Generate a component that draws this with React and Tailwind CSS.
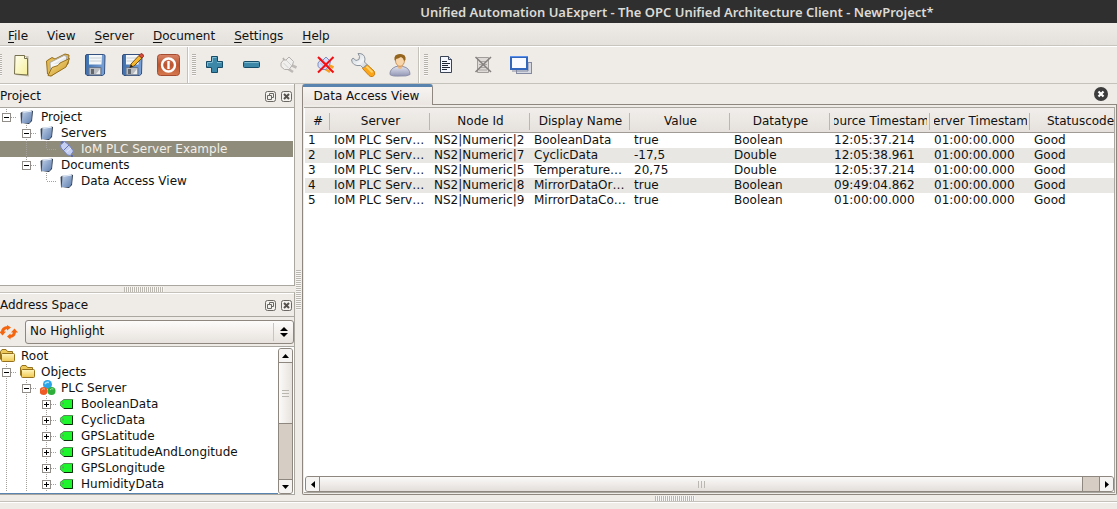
import React from "react";

const menus = [
  ["F", "ile"],
  ["", "View"],
  ["S", "erver"],
  ["D", "ocument"],
  ["S", "ettings"],
  ["H", "elp"],
];

const Svg = ({ w = 26, h = 26, children, ...rest }) => (
  <svg width={w} height={h} viewBox={`0 0 ${w} ${h}`} className="block shrink-0" aria-hidden="true" {...rest}>
    {children}
  </svg>
);

const NewIcon = () => (
  <Svg>
    <defs>
      <linearGradient id="paper" x1="0" y1="0" x2="1" y2="1">
        <stop offset="0" stopColor="#fffff0" />
        <stop offset="1" stopColor="#f7ef9a" />
      </linearGradient>
    </defs>
    <path d="M8 4.500 20.500 4 21 24.500 8 23z" fill="#8b8460" opacity=".45" />
    <path d="M7 3.500H16.500L19.500 6.500V23L6.500 22z" fill="url(#paper)" stroke="#77704c" />
    <path d="M16.500 3.500V6.500H19.500" fill="#fff" stroke="#77704c" />
  </Svg>
);

const OpenIcon = () => (
  <Svg>
    <defs>
      <linearGradient id="folder" x1="0" y1="0" x2="1" y2="1">
        <stop offset="0" stopColor="#fbe7a0" />
        <stop offset="1" stopColor="#c98f13" />
      </linearGradient>
    </defs>
    <path d="M1.500 9 7 5.500 10 7 20 2 24 3 23 12 6 24 2.500 22z" fill="#e2b850" stroke="#96701f" />
    <path d="M5 10.500 19 3.500 22 4.500 20 12 8 17 5.500 20z" fill="#f7f7f7" stroke="#aaa" />
    <path d="M8 12 21 5 19 12z" fill="#e6e9eb" />
    <path d="M3 23.500 7 15.500 13 13.500 15 11 24.500 6.500 21 15 6 24z" fill="url(#folder)" stroke="#96701f" />
  </Svg>
);

const Disk = ({ children, id }) => (
  <Svg>
    <defs>
      <linearGradient id={id} x1="0" y1="0" x2="1" y2="0">
        <stop offset="0" stopColor="#3d6fae" />
        <stop offset="1" stopColor="#7ba3d8" />
      </linearGradient>
    </defs>
    <path d="M3.500 4Q3.500 2.500 5 2.500H21.500Q23 2.500 23 4L22.500 22 20.500 23.500H5L3.500 22z" fill={`url(#${id})`} stroke="#34507e" />
    <path d="M7 3H20L19.500 12.500H7z" fill="#f4f7f9" />
    <path d="M7.500 6H19.500M7.500 9H19.500" stroke="#c6ced4" />
    <path d="M7 15.500H19V23H7z" fill="#b9bcc0" stroke="#63758e" />
    <path d="M9 17H12V22H9z" fill="#61676d" />
    <path d="M14 22 18 17V22z" fill="#ececec" />
    {children}
  </Svg>
);

const PowerIcon = () => (
  <Svg>
    <defs>
      <linearGradient id="power" x1="0" y1="0" x2="0" y2="1">
        <stop offset="0" stopColor="#d98668" />
        <stop offset=".5" stopColor="#bb5430" />
        <stop offset="1" stopColor="#d67a50" />
      </linearGradient>
    </defs>
    <rect x="1.500" y="2.500" width="22" height="21" rx="3" fill="url(#power)" stroke="#a64a30" />
    <circle cx="12.500" cy="13" r="6.500" fill="none" stroke="#fff" strokeWidth="2.400" />
    <path d="M12.500 9V17" stroke="#fff" strokeWidth="2.400" />
  </Svg>
);

const PlusIcon = () => (
  <Svg>
    <path d="M9.500 4.500H15.500V9.500H20.500V15.500H15.500V20.500H9.500V15.500H4.500V9.500H9.500z" fill="#3d87a8" stroke="#164c68" strokeLinejoin="round" />
    <path d="M10.500 10V5.500H14.500M5.500 14V10.500H10.500M15 10.500H19.500" fill="none" stroke="#82bad0" />
  </Svg>
);

const MinusIcon = () => (
  <Svg>
    <rect x="4.500" y="9.500" width="16" height="6" rx="1" fill="#3d87a8" stroke="#164c68" />
    <path d="M5.500 10.500H19.500" stroke="#82bad0" />
  </Svg>
);

const Plug = ({ fill, stroke, accent }) => (
  <g>
    <path d="M15 13 20.500 15.500M11.500 16.500 17 20" fill="none" stroke={accent} strokeWidth="2.600" />
    <path d="M7 6 8.500 8.500" stroke={stroke} strokeWidth="1.600" />
    <path d="M5 11 7.500 8 10 8 13 5 17.500 9.500 16.500 13 13 17.500 8.500 17.500 5 14.500z" fill={fill} stroke={stroke} />
    <path d="M10 8 16 14M7.500 11 12.500 16" stroke={stroke} opacity=".45" />
  </g>
);

const ConnectIcon = () => (
  <Svg>
    <Plug fill="#f1efee" stroke="#b3b0ad" accent="#bcb9b6" />
  </Svg>
);

const DisconnectIcon = () => (
  <Svg>
    <Plug fill="#d5dcf8" stroke="#7f8cc8" accent="#f9a01f" />
    <path d="M5 5 20.500 20.500M20.500 5 5 20.500" stroke="#f50d12" strokeWidth="2" />
  </Svg>
);

const WrenchIcon = () => (
  <Svg>
    <defs>
      <linearGradient id="steel" x1="0" y1="0" x2="1" y2="1">
        <stop offset="0" stopColor="#c3ccd4" />
        <stop offset=".6" stopColor="#f3f5f7" />
        <stop offset="1" stopColor="#c0c7ce" />
      </linearGradient>
    </defs>
    <path d="M12.500 16.500 17 12.500 24 19Q26 23 22.500 24.500 20.500 25 19 23.500z" fill="#fba51b" stroke="#c97d10" />
    <path d="M16.500 14.500 22.500 20.500" stroke="#ffd36b" strokeWidth="2" />
    <path d="M8 1.500Q14.500 1 15 7L14.500 10 17 12.500 13 16 10.500 13.500Q2.500 14.500 1.500 8L3 6 6 8.500 9 7.500 9.500 4.500z" fill="url(#steel)" stroke="#8d959c" />
  </Svg>
);

const UserIcon = () => (
  <Svg>
    <defs>
      <linearGradient id="shirt" x1="0" y1="0" x2="0" y2="1">
        <stop offset="0" stopColor="#dfe2ef" />
        <stop offset="1" stopColor="#9296b4" />
      </linearGradient>
    </defs>
    <path d="M3 22.500Q2.500 17 9 14.500H16Q23 16 23 22.500 20 24.500 13 24 5 24.500 3 22.500z" fill="url(#shirt)" stroke="#8c90aa" />
    <path d="M10 13H16L15 16Q13 18 11 16z" fill="#e9b884" />
    <ellipse cx="13" cy="8.500" rx="4.500" ry="5.800" fill="#f9d5ab" stroke="#c9935a" />
    <path d="M7.500 8Q6.500 2 13 2T18.500 8L17 9Q16.500 6 14 5 10.500 7 9 7L8.500 9z" fill="#93651f" />
  </Svg>
);

const DocIcon = () => (
  <Svg>
    <path d="M6.500 4.500H14.500L17.500 7.500V20.500H6.500z" fill="#f4f7ff" stroke="#3b4454" />
    <path d="M14.500 4.500V7.500H17.500" fill="#c7d8ff" stroke="#3b4454" />
    <path d="M8 9.500H13M8 11.500H16M8 13.500H14M8 15.500H16M8 17.500H13" stroke="#1f2735" />
  </Svg>
);

const DocOffIcon = () => (
  <Svg>
    <path d="M6.500 5.500H17.500V20.500H6.500z" fill="#dddad7" stroke="#a09d9a" />
    <path d="M8 9.500H16M8 12.500H16M8 15.500H16M8 18H16" stroke="#aaa7a4" />
    <path d="M4.500 5 20 20M20 5 4.500 20" stroke="#858280" strokeWidth="1.600" />
  </Svg>
);

const WindowsIcon = () => (
  <Svg>
    <rect x="8.500" y="10.500" width="15" height="11" fill="#d6d9e2" stroke="#8289a0" />
    <path d="M4 19H20V11" fill="none" stroke="#8289a0" />
    <rect x="3" y="5" width="16" height="12" fill="#f8faff" stroke="#3266bd" strokeWidth="2" />
    <path d="M2 4.500H20" stroke="#5c90ed" />
  </Svg>
);

const groups = [
  [
    ["New", <NewIcon />],
    ["Open", <OpenIcon />],
    ["Save", <Disk id="disk" />],
    [
      "Save as",
      <Disk id="diskEdit">
        <path d="M11 15.500 12 12 20 3.500 23 6 15 14z" fill="#f5b62b" stroke="#74501a" />
        <path d="M20 3.500 22 1.500Q25 2 24.500 4.500L23 6z" fill="#dc4c3b" stroke="#9c3528" />
        <path d="M10.500 16 12 12.500 14 14.500z" fill="#222" />
      </Disk>,
    ],
    ["Exit", <PowerIcon />],
  ],
  [
    ["Add server", <PlusIcon />],
    ["Remove server", <MinusIcon />],
    ["Connect", <ConnectIcon />],
    ["Disconnect", <DisconnectIcon />],
    ["Server properties", <WrenchIcon />],
    ["Change user", <UserIcon />],
  ],
  [
    ["Add document", <DocIcon />],
    ["Remove document", <DocOffIcon />],
    ["Windows", <WindowsIcon />],
  ],
];

const BookIcon = () => (
  <Svg w={16} h={16}>
    <defs>
      <linearGradient id="book" x1="0" y1="0" x2="1" y2="1">
        <stop offset="0" stopColor="#c3d3ea" />
        <stop offset="1" stopColor="#6080b0" />
      </linearGradient>
    </defs>
    <path d="M0.500 4 2.500 2.500 3 14 1 14.500z" fill="#35465f" />
    <path d="M2 14 9 15 12 12 13 2 11.500 1.500z" fill="#26344b" />
    <path d="M3 2.500 12 1.500 11.500 11 9.500 14 1.500 14z" fill="url(#book)" />
    <path d="M3.500 3.200 11.500 2.200" stroke="#e6eef8" />
  </Svg>
);

const ServerIcon = () => (
  <Svg w={16} h={16}>
    <path d="M1 2.500 3 .5M11 15 13 15" stroke="#5d6aa5" strokeWidth="2" />
    <path d="M0.500 4 4.500 0.500 9 4 13.500 10 10.500 14.500 7.500 14 1 7z" fill="#c4cff2" stroke="#7583bf" />
    <path d="M3.500 9.500 9 4" stroke="#6776b4" />
    <path d="M6.500 11 11 7" stroke="#e6ecfd" />
  </Svg>
);

const FolderIcon = () => (
  <Svg w={16} h={16}>
    <defs>
      <linearGradient id="smallFolder" x1="0" y1="0" x2="0" y2="1">
        <stop offset="0" stopColor="#fff6bf" />
        <stop offset="1" stopColor="#f0c850" />
      </linearGradient>
    </defs>
    <path d="M0.500 11.500V3.500L2 1.500H6L7.500 3.500H12.500V6" fill="#edc95c" stroke="#95701d" />
    <rect x="1.500" y="5.500" width="13" height="8" rx="1" fill="url(#smallFolder)" stroke="#95701d" />
  </Svg>
);

const ObjectsIcon = () => (
  <Svg w={16} h={16}>
    <circle cx="7.500" cy="4.500" r="4.500" fill="#2ba4e8" />
    <circle cx="3.500" cy="11" r="4" fill="#ef5a24" />
    <circle cx="11.500" cy="11" r="4" fill="#2fae3c" />
    <path d="M5 4Q6.500 1.500 9 2.500" stroke="#a7e1ff" strokeWidth="1.500" fill="none" />
    <path d="M1.500 10Q3 8 5 9" stroke="#ffb08a" fill="none" />
    <path d="M10 10Q11.500 8 13.500 9" stroke="#9be69a" fill="none" />
  </Svg>
);

const TagIcon = () => (
  <Svg w={16} h={16}>
    <path d="M4 3H13V13H4L0 9.500V6.500z" fill="#1ff52c" />
    <path d="M12.500 3.500H4L0 6.500V9L4 12.500" fill="none" stroke="#5b8a5b" />
    <path d="M4 12.500H12.500V4" fill="none" stroke="#0a2a0a" />
    <circle cx="3" cy="7.500" r="1" fill="#6f8f6f" />
  </Svg>
);

// One 20px indentation step: dotted guide lines plus an optional expander box.
const Guide = ({ up, down, right, box }) => (
  <Svg w={20} h={16}>
    <g stroke="#a3a09c" strokeDasharray="1 1">
      {up && <path d="M6.500 0V8" />}
      {down && <path d="M6.500 8V16" />}
      {right && <path d="M7 8.500H16" />}
    </g>
    {box && (
      <>
        <rect x="2.500" y="4.500" width="8" height="8" fill="#fff" stroke="#918d88" />
        <path d={box === "+" ? "M4 8.500H9M6.500 6V11" : "M4 8.500H9"} stroke="#000" />
      </>
    )}
  </Svg>
);

const icons = { book: BookIcon, server: ServerIcon, folder: FolderIcon, objects: ObjectsIcon, tag: TagIcon };

const TreeRow = ({ guides, icon, label, selected, level }) => {
  const Icon = icons[icon];
  return (
    <li
      role="treeitem"
      aria-level={level}
      aria-selected={!!selected}
      className={
        selected
          ? "flex h-4 items-center whitespace-nowrap bg-[#908c7c] text-[#f2f0e8]"
          : "flex h-4 items-center whitespace-nowrap"
      }
    >
      {guides.map((g, i) => (
        <Guide key={i} {...g} />
      ))}
      <Icon />
      <span className="pl-[5px]">{label}</span>
    </li>
  );
};

const line = { up: true, down: true };
const none = {};
const projectTree = [
  { label: "Project", icon: "book", guides: [{ up: true, right: true, box: "-" }] },
  { label: "Servers", icon: "book", guides: [none, { up: true, down: true, right: true, box: "-" }] },
  { label: "IoM PLC Server Example", icon: "server", selected: true, guides: [none, line, { up: true, right: true }] },
  { label: "Documents", icon: "book", guides: [none, { up: true, right: true, box: "-" }] },
  { label: "Data Access View", icon: "book", guides: [none, none, { up: true, right: true }] },
];
const addressTree = [
  { label: "Root", icon: "folder", guides: [] },
  { label: "Objects", icon: "folder", guides: [{ ...line, right: true, box: "-" }] },
  { label: "PLC Server", icon: "objects", guides: [line, { ...line, right: true, box: "-" }] },
  ...["BooleanData", "CyclicData", "GPSLatitude", "GPSLatitudeAndLongitude", "GPSLongitude", "HumidityData"].map(
    (label) => ({ label, icon: "tag", guides: [line, line, { ...line, right: true, box: "+" }] })
  ),
];

const Dock = ({ title }) => (
  <div className="flex h-6 shrink-0 items-center border-t border-b border-t-white border-b-[#aaa6a0]">
    <h2 className="flex-1">{title}</h2>
    <button aria-label={`Float ${title}`} className="mr-[5px]">
      <Svg w={11} h={11}>
        <rect x=".5" y=".5" width="10" height="10" rx="2" fill="#f4f2ef" stroke="#6b6763" />
        <path d="M4.500 4V2.500H8.500V6.500H7M2.500 4.500H6.500V8.500H2.500z" fill="none" stroke="#6b6763" />
      </Svg>
    </button>
    <button aria-label={`Close ${title}`} className="mr-[2px]">
      <Svg w={11} h={11}>
        <rect x=".5" y=".5" width="10" height="10" rx="2" fill="#f4f2ef" stroke="#6b6763" />
        <path d="M3 3 8 8M8 3 3 8" stroke="#55514d" strokeWidth="2" />
      </Svg>
    </button>
  </div>
);

const GripH = () => (
  <div className="h-[5px] w-10 bg-[repeating-linear-gradient(90deg,#bab6b0_0_1px,#f8f7f5_1px_2px)]" />
);

const columns = ["#", "Server", "Node Id", "Display Name", "Value", "Datatype", "Source Timestamp", "Server Timestamp", "Statuscode"];
const rows = [
  ["1", "IoM PLC Serv…", "NS2|Numeric|2", "BooleanData", "true", "Boolean", "12:05:37.214", "01:00:00.000", "Good"],
  ["2", "IoM PLC Serv…", "NS2|Numeric|7", "CyclicData", "-17,5", "Double", "12:05:38.961", "01:00:00.000", "Good"],
  ["3", "IoM PLC Serv…", "NS2|Numeric|5", "Temperature…", "20,75", "Double", "12:05:37.214", "01:00:00.000", "Good"],
  ["4", "IoM PLC Serv…", "NS2|Numeric|8", "MirrorDataOr…", "true", "Boolean", "09:49:04.862", "01:00:00.000", "Good"],
  ["5", "IoM PLC Serv…", "NS2|Numeric|9", "MirrorDataCo…", "true", "Boolean", "01:00:00.000", "01:00:00.000", "Good"],
];

const DataTable = () => (
  <table className="w-[825px] table-fixed border-collapse">
    <colgroup>
      <col className="w-[25px]" />
      {columns.slice(1).map((c) => (
        <col key={c} className="w-[100px]" />
      ))}
    </colgroup>
    <thead>
      <tr className="h-6 bg-linear-to-b from-[#f1eeeb] to-[#e6e1dc]">
        {columns.map((c) => (
          <th key={c} scope="col" className="border-b border-[#a09b95] px-0 pt-[3px] pb-0 font-normal">
            <div className="flex h-[17px] items-center border-r border-[#bab6b0] pr-[2px] pl-1">
              <div className="flex w-full justify-center overflow-hidden">
                <span className="whitespace-nowrap">{c}</span>
              </div>
            </div>
          </th>
        ))}
      </tr>
    </thead>
    <tbody>
      {rows.map((r) => (
        <tr key={r[0]} className="h-[15px] even:bg-[#e8e7e3]">
          {r.map((v, i) => (
            <td key={i} className={i === 0 ? "py-0 pl-[3px] whitespace-nowrap" : "py-0 pl-1 whitespace-nowrap"}>
              {v}
            </td>
          ))}
        </tr>
      ))}
    </tbody>
  </table>
);

export default function App() {
  return (
    <div className="flex h-screen flex-col overflow-hidden bg-[#efebe7] font-['DejaVu_Sans',sans-serif] text-[12px] leading-[15px] text-[#111]">
      <header className="flex h-[23px] shrink-0 items-center justify-center bg-[#2f2f2f] pt-[2px] pl-[237px]">
        <h1 className="whitespace-nowrap font-['Noto_Sans',sans-serif] text-[13px] font-semibold text-[#dcdad5]">
          Unified Automation UaExpert - The OPC Unified Architecture Client - NewProject*
        </h1>
      </header>

      <nav className="flex h-[23px] shrink-0 items-center gap-[19px] border-b border-[#c8c4be] bg-linear-to-b from-[#efebe7] to-[#e4e0db] pt-1 pl-2">
        {menus.map(([key, rest]) => (
          <button key={rest} className="whitespace-nowrap">
            <span className="underline underline-offset-2">{key}</span>
            {rest}
          </button>
        ))}
      </nav>

      <div className="flex h-[38px] shrink-0 border-t border-b border-t-white border-b-[#c5c1bb]" role="toolbar">
        {groups.map((items, g) => (
          <div
            key={g}
            className={
              g === 0
                ? "flex items-center border-r border-[#c5c1bb]"
                : g === 1
                  ? "flex items-center border-r border-l border-l-white border-r-[#c5c1bb] pl-[3px]"
                  : "flex items-center border-l border-white pl-1"
            }
          >
            <div
              className={
                g === 0
                  ? "h-[22px] w-[2px] bg-[repeating-linear-gradient(180deg,#b5b1ab_0_1px,#f8f7f5_1px_2px)]"
                  : "h-[22px] w-1 bg-[repeating-linear-gradient(180deg,#b5b1ab_0_1px,#f8f7f5_1px_2px)]"
              }
            />
            {items.map(([name, icon]) => (
              <button key={name} aria-label={name} className="flex w-[37px] justify-center">
                {icon}
              </button>
            ))}
          </div>
        ))}
      </div>

      <main className="flex min-h-0 flex-1">
        <aside className="flex w-[295px] shrink-0 flex-col">
          <section className="flex h-[202px] shrink-0 flex-col border-r border-b border-[#aaa6a0]">
            <Dock title="Project" />
            <ul role="tree" aria-label="Project" className="flex-1 bg-white pt-px pr-px">
              {projectTree.map((n) => (
                <TreeRow key={n.label} level={n.guides.length} {...n} />
              ))}
            </ul>
          </section>
          <div className="flex h-[6px] shrink-0 items-center justify-center pr-2">
            <GripH />
          </div>
          <section className="flex min-h-0 flex-1 flex-col border-t border-r border-t-[#c5c1bb] border-r-[#aaa6a0]">
            <Dock title="Address Space" />
            <div className="flex h-[29px] shrink-0 items-center gap-[7px]">
              <button aria-label="Refresh">
                <Svg w={18} h={16}>
                  <path d="M2.500 8.500Q2.500 3.500 8 3.500M14.500 7.500Q14.500 12.500 9.500 12.500" fill="none" stroke="#f4650f" strokeWidth="3" />
                  <path d="M-1 7.500H6L2.500 11.500zM11 8.500H18L14.500 4.500z" fill="#f4650f" />
                  <path d="M7 1 11 3.500 7 6.500zM10.500 9.500 7 12.500 10.500 15.500z" fill="#f4650f" />
                </Svg>
              </button>
              <div className="relative flex-1">
                <select
                  aria-label="Highlight"
                  className="block h-6 w-full appearance-none rounded-[3px] border border-[#8d8780] bg-linear-to-b from-[#fdfcfb] to-[#e7e2dd] pl-1"
                >
                  <option>No Highlight</option>
                </select>
                <div className="pointer-events-none absolute top-[3px] right-[6px] flex h-[18px] items-center border-l border-[#c8c4be] pl-[6px]">
                  <Svg w={8} h={12}>
                    <path d="M0 5H8L4 1zM0 7H8L4 11z" fill="#000" />
                  </Svg>
                </div>
              </div>
            </div>
            <div className="flex min-h-0 flex-1 border-t border-b border-[#aaa6a0] bg-white pt-px">
              <ul role="tree" aria-label="Address Space" className="min-w-0 flex-1 overflow-hidden border-b border-[#5a84b0]">
                {addressTree.map((n) => (
                  <TreeRow key={n.label} level={n.guides.length + 1} {...n} />
                ))}
              </ul>
              <div className="mr-px flex w-[15px] flex-col rounded-[3px] border border-[#8d8780] bg-[#d6cdc5]">
                <button aria-label="Scroll up" className="flex h-[14px] items-center justify-center rounded-t-[2px] border-b border-[#8d8780] bg-[#f6f4f2]">
                  <Svg w={7} h={4}>
                    <path d="M0 4H7L3.500 0z" fill="#000" />
                  </Svg>
                </button>
                <div className="flex h-[61px] flex-col items-center justify-center gap-[2px] border-b border-[#8d8780] bg-linear-to-r from-[#fbfaf9] to-[#e7e2dd]">
                  <div className="h-px w-[7px] bg-[#bab6b0]" />
                  <div className="h-px w-[7px] bg-[#bab6b0]" />
                  <div className="h-px w-[7px] bg-[#bab6b0]" />
                </div>
                <div className="flex-1" />
                <button aria-label="Scroll down" className="flex h-[14px] items-center justify-center rounded-b-[2px] border-t border-[#8d8780] bg-[#f6f4f2]">
                  <Svg w={7} h={4}>
                    <path d="M0 0H7L3.500 4z" fill="#000" />
                  </Svg>
                </button>
              </div>
            </div>
          </section>
        </aside>

        <div className="flex w-[7px] shrink-0 items-center justify-center">
          <div className="h-10 w-[5px] bg-[repeating-linear-gradient(180deg,#bab6b0_0_1px,#f8f7f5_1px_2px)]" />
        </div>

        <section className="flex min-w-0 flex-1 flex-col">
          <div className="flex h-[21px] shrink-0">
            <button className="w-[131px] rounded-t-[3px] border-t-[3px] border-r border-l border-t-[#5a84b0] border-r-[#8d8780] border-l-[#8d8780] bg-linear-to-b from-[#f6f3f1] to-[#ebe6e2] pr-[2px]">
              Data Access View
            </button>
            <div className="flex flex-1 items-center justify-end border-b border-[#8d8780] pr-2">
              <button aria-label="Close tab">
                <Svg w={16} h={16}>
                  <circle cx="8" cy="8" r="7" fill="#3c3c3c" />
                  <path d="M5.500 5.500 10.500 10.500M10.500 5.500 5.500 10.500" stroke="#fff" strokeWidth="2.200" />
                </Svg>
              </button>
            </div>
          </div>
          <div className="flex min-h-0 flex-1 rounded-b-[2px] border-r border-b border-l border-[#8d8780] pt-[2px] pr-px pb-px pl-px">
            <div className="flex min-w-0 flex-1 flex-col border-t border-r border-b border-[#aaa6a0] bg-white pl-px">
              <div className="min-h-0 flex-1 overflow-hidden">
                <DataTable />
              </div>
              <div className="flex h-4 shrink-0 rounded-[3px] border border-[#8d8780] bg-[#d6cdc5]">
                <button aria-label="Scroll left" className="flex w-[14px] items-center justify-center rounded-l-[2px] border-r border-[#8d8780] bg-[#f6f4f2]">
                  <Svg w={4} h={7}>
                    <path d="M4 0V7L0 3.500z" fill="#000" />
                  </Svg>
                </button>
                <div className="flex flex-1 items-center justify-center gap-[2px] border-r border-[#8d8780] bg-linear-to-b from-[#fbfaf9] to-[#e3deda]">
                  <div className="h-[7px] w-px bg-[#bab6b0]" />
                  <div className="h-[7px] w-px bg-[#bab6b0]" />
                  <div className="h-[7px] w-px bg-[#bab6b0]" />
                </div>
                <div className="w-4" />
                <button aria-label="Scroll right" className="flex w-[14px] items-center justify-center rounded-r-[2px] border-l border-[#8d8780] bg-[#f6f4f2]">
                  <Svg w={4} h={7}>
                    <path d="M0 0V7L4 3.500z" fill="#000" />
                  </Svg>
                </button>
              </div>
            </div>
          </div>
        </section>
      </main>

      <div className="flex h-[6px] shrink-0 items-center justify-center pl-[233px]">
        <GripH />
      </div>
      <footer className="h-2 shrink-0 border-t border-[#c5c1bb]">
        <div className="h-px bg-white" />
      </footer>
    </div>
  );
}
